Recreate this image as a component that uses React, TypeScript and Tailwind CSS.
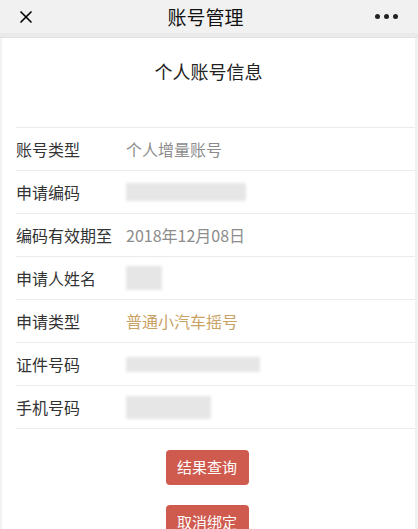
import { X } from 'lucide-react';

type Row = {
  label: string;
  value?: string;
  tone?: 'gray' | 'gold';
  blur?: string;
};

const rows: Row[] = [
  { label: '账号类型', value: '个人增量账号', tone: 'gray' },
  { label: '申请编码', blur: 'w-[120px] h-[18px]' },
  { label: '编码有效期至', value: '2018年12月08日', tone: 'gray' },
  { label: '申请人姓名', blur: 'w-[36px] h-[24px]' },
  { label: '申请类型', value: '普通小汽车摇号', tone: 'gold' },
  { label: '证件号码', blur: 'w-[134px] h-[15px]' },
  { label: '手机号码', blur: 'w-[85px] h-[23px]' },
];

export default function App() {
  return (
    <div
      className="w-[418px] h-[529px] overflow-hidden bg-[#f2f2f2] text-[#222]"
      style={{ fontFamily: '"Noto Sans CJK SC", "Noto Sans", sans-serif' }}
    >
      {/* 顶部导航 */}
      <div className="h-[33px] flex items-center justify-between px-4 bg-[#f1f1f1]">
        <X className="w-[20px] h-[20px] text-black" strokeWidth={2} />
        <span className="text-[19px] leading-none text-[#111]">账号管理</span>
        <div className="flex items-center gap-[4px] pr-1">
          <span className="w-[5px] h-[5px] rounded-full bg-[#222]" />
          <span className="w-[5px] h-[5px] rounded-full bg-[#222]" />
          <span className="w-[5px] h-[5px] rounded-full bg-[#222]" />
        </div>
      </div>
      <div className="h-[5px] bg-[#eaeaea] border-b border-[#e2e2e2]" />

      {/* 内容卡片 */}
      <div className="ml-[2px] mr-[3px] bg-white h-full">
        <div className="h-[89px] flex items-start justify-center pt-[20px]">
          <span className="text-[18px] text-[#222]">个人账号信息</span>
        </div>

        <div className="pl-[14px]">
          {rows.map((r) => (
            <div
              key={r.label}
              className="h-[43px] flex items-center border-t border-[#ebebeb]"
            >
              <span className="w-[110px] text-[16px] text-[#333]">{r.label}</span>
              {r.value && (
                <span
                  className={
                    r.tone === 'gold'
                      ? 'text-[16px] text-[#c9a266]'
                      : 'text-[16px] text-[#8c8c8c]'
                  }
                >
                  {r.value}
                </span>
              )}
              {r.blur && (
                <div className={`${r.blur} bg-[#e6e6e6] blur-[1.5px]`} />
              )}
            </div>
          ))}
          <div className="border-t border-[#ebebeb]" />
        </div>

        <div className="flex flex-col items-center gap-[20px] pt-[21px] pr-[3px]">
          <button className="w-[83px] h-[35px] rounded-[4px] bg-[#cf5a4e] text-white text-[15px]">
            结果查询
          </button>
          <button className="w-[83px] h-[35px] rounded-[4px] bg-[#cf5a4e] text-white text-[15px]">
            取消绑定
          </button>
        </div>
      </div>
    </div>
  );
}
